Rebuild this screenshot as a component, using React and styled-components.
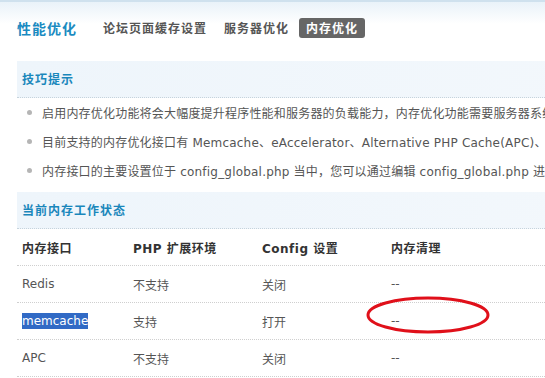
import React from "react";
import styled, { createGlobalStyle } from "styled-components";

const Global = createGlobalStyle`
  html, body { margin: 0; padding: 0; background: #fff; }
  body {
    font-family: "DejaVu Sans", "Noto Sans CJK SC", sans-serif;
    font-size: 12px;
    color: #555;
    overflow: hidden;
  }
`;

const Page = styled.div`
  width: 545px;
  height: 378px;
  overflow: hidden;
  box-sizing: border-box;
  border-top: 2px solid #cfe1ee;
  background: linear-gradient(#e9f2f9 0px, #ffffff 22px);
`;

const Header = styled.div`
  display: flex;
  align-items: center;
  height: 20px;
  padding: 16px 0 0 17px;
  margin-bottom: 23px;
`;

const Title = styled.h1`
  margin: 0 19px 0 0;
  font-family: "Noto Sans CJK SC", sans-serif;
  font-size: 14px;
  font-weight: 700;
  letter-spacing: 1px;
  line-height: 20px;
  color: #1b8bc1;
`;

const Tabs = styled.div`
  display: flex;
  gap: 3px;
`;

const Tab = styled.span`
  display: block;
  height: 20px;
  padding: 0 7px;
  border-radius: 3px;
  font-family: "Noto Sans CJK SC", sans-serif;
  font-size: 12px;
  font-weight: 700;
  letter-spacing: 1px;
  line-height: 20px;
  color: ${(p) => (p.$active ? "#fff" : "#555")};
  background: ${(p) => (p.$active ? "#666" : "transparent")};
`;

const Section = styled.div`
  margin: ${(p) => (p.$gap ? "7px" : "0")} 0 0 17px;
  width: 1100px;
`;

const SectionHead = styled.h2`
  margin: 0;
  height: 36px;
  padding-left: 5px;
  border-bottom: 1px dotted #c6d3dc;
  background: linear-gradient(to right, #eef5fb, #f7fafd);
  font-family: "Noto Sans CJK SC", sans-serif;
  font-size: 12px;
  font-weight: 700;
  letter-spacing: 1px;
  line-height: 36px;
  color: #1a87bb;
`;

const TipList = styled.ul`
  margin: 0;
  padding: 0;
  list-style: none;
`;

const Tip = styled.li`
  display: flex;
  align-items: center;
  height: 29px;
  white-space: nowrap;
  color: #555;
  letter-spacing: 0.2px;
`;

const Dot = styled.span`
  flex: none;
  width: 5px;
  height: 5px;
  margin: 0 10px 0 10px;
  border-radius: 50%;
  background: #b5b5b5;
`;

const Row = styled.div`
  display: grid;
  grid-template-columns: 111px 129px 129px 1fr;
  align-items: center;
  height: 36px;
  padding-left: 5px;
  border-bottom: 1px dotted #cfcfcf;
  font-weight: ${(p) => (p.$head ? 700 : 400)};
  letter-spacing: ${(p) => (p.$head ? "0.5px" : "0")};
  color: ${(p) => (p.$head ? "#333" : "#555")};
`;

const Cell = styled.div`
  position: relative;
  white-space: nowrap;
`;

const Selected = styled.span`
  background: #316ac5;
  color: #fff;
  padding: 1px 0;
`;

const Ellipse = styled.svg`
  position: absolute;
  left: -25px;
  top: -18px;
  width: 124px;
  height: 38px;
  overflow: visible;
`;

const tips = [
  "启用内存优化功能将会大幅度提升程序性能和服务器的负载能力，内存优化功能需要服务器系统以及PHP扩展模块支持",
  "目前支持的内存优化接口有 Memcache、eAccelerator、Alternative PHP Cache(APC)、 Xcache、Redis、Wincache 等",
  "内存接口的主要设置位于 config_global.php 当中，您可以通过编辑 config_global.php 进行高级设置",
];

const rows = [
  ["Redis", "不支持", "关闭", "--"],
  ["memcache", "支持", "打开", "--"],
  ["APC", "不支持", "关闭", "--"],
];

export default function App() {
  return (
    <>
      <Global />
      <Page>
        <Header>
          <Title>性能优化</Title>
          <Tabs>
            <Tab>论坛页面缓存设置</Tab>
            <Tab>服务器优化</Tab>
            <Tab $active>内存优化</Tab>
          </Tabs>
        </Header>

        <Section>
          <SectionHead>技巧提示</SectionHead>
          <TipList>
            {tips.map((t) => (
              <Tip key={t}>
                <Dot />
                {t}
              </Tip>
            ))}
          </TipList>
        </Section>

        <Section $gap>
          <SectionHead>当前内存工作状态</SectionHead>
          <Row $head>
            <Cell>内存接口</Cell>
            <Cell>PHP 扩展环境</Cell>
            <Cell>Config 设置</Cell>
            <Cell>内存清理</Cell>
          </Row>
          {rows.map((r, i) => (
            <Row key={r[0]}>
              <Cell>{i === 1 ? <Selected>{r[0]}</Selected> : r[0]}</Cell>
              <Cell>{r[1]}</Cell>
              <Cell>{r[2]}</Cell>
              <Cell>
                {r[3]}
                {i === 1 && (
                  <Ellipse viewBox="0 0 124 38">
                    <ellipse cx="62" cy="19" rx="60" ry="17" fill="none" stroke="#e0101a" strokeWidth="3" />
                  </Ellipse>
                )}
              </Cell>
            </Row>
          ))}
        </Section>
      </Page>
    </>
  );
}
